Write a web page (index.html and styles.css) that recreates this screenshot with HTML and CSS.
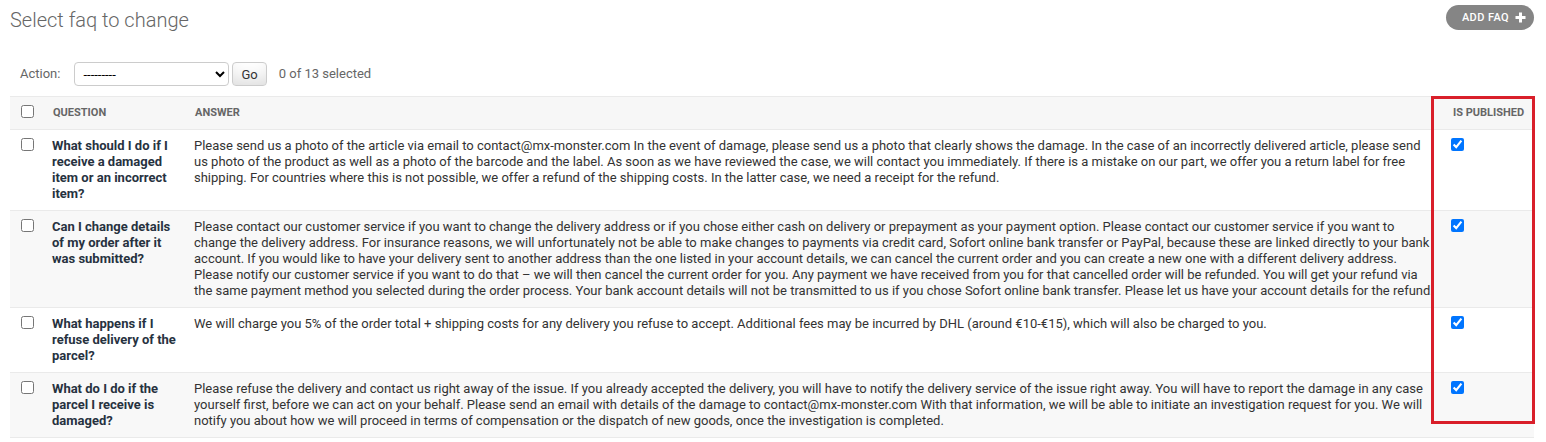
FILE: index.html
```html
<!DOCTYPE html>
<html lang="en">
<head>
<meta charset="utf-8">
<title>Select faq to change</title>
<link rel="stylesheet" href="styles.css">
</head>
<body>
<div class="content">
  <div class="title-row">
    <h1 class="title">Select faq to change</h1>
    <a class="addlink" href="#">ADD FAQ
      <svg class="plus" width="11" height="11" viewBox="0 0 11 11"><path d="M5.5 0.5v10M0.5 5.5h10" stroke="#fff" stroke-width="3"/></svg>
    </a>
  </div>
  <div class="actions">
    <label class="action-label">Action:</label>
    <select class="action-select"><option>---------</option></select>
    <button class="go">Go</button>
    <span class="counter">0 of 13 selected</span>
  </div>
  <div class="table-wrap">
    <table class="result-list">
      <colgroup>
        <col class="c-check"><col class="c-question"><col class="c-answer"><col class="c-pub">
      </colgroup>
      <thead>
        <tr>
          <th class="check-col"><input type="checkbox"></th>
          <th>QUESTION</th>
          <th>ANSWER</th>
          <th class="pub-head">IS PUBLISHED</th>
        </tr>
      </thead>
      <tbody>
        <tr>
          <td class="check-col"><input type="checkbox"></td>
          <th class="question"><a href="#">What should I do if I receive a damaged item or an incorrect item?</a></th>
          <td class="answer">Please send us a photo of the article via email to contact@mx-monster.com In the event of damage, please send us a photo that clearly shows the damage. In the case of an incorrectly delivered article, please send us photo of the product as well as a photo of the barcode and the label. As soon as we have reviewed the case, we will contact you immediately. If there is a mistake on our part, we offer you a return label for free shipping. For countries where this is not possible, we offer a refund of the shipping costs. In the latter case, we need a receipt for the refund.</td>
          <td class="pub"><input type="checkbox" checked></td>
        </tr>
        <tr class="even">
          <td class="check-col"><input type="checkbox"></td>
          <th class="question"><a href="#">Can I change details of my order after it was submitted?</a></th>
          <td class="answer">Please contact our customer service if you want to change the delivery address or if you chose either cash on delivery or prepayment as your payment option. Please contact our customer service if you want to change the delivery address. For insurance reasons, we will unfortunately not be able to make changes to payments via credit card, Sofort online bank transfer or PayPal, because these are linked directly to your bank account. If you would like to have your delivery sent to another address than the one listed in your account details, we can cancel the current order and you can create a new one with a different delivery address. Please notify our customer service if you want to do that – we will then cancel the current order for you. Any payment we have received from you for that cancelled order will be refunded. You will get your refund via the same payment method you selected during the order process. Your bank account details will not be transmitted to us if you chose Sofort online bank transfer. Please let us have your account details for the refund.</td>
          <td class="pub"><input type="checkbox" checked></td>
        </tr>
        <tr>
          <td class="check-col"><input type="checkbox"></td>
          <th class="question"><a href="#">What happens if I refuse delivery of the parcel?</a></th>
          <td class="answer">We will charge you 5% of the order total + shipping costs for any delivery you refuse to accept. Additional fees may be incurred by DHL (around €10-€15), which will also be charged to you.</td>
          <td class="pub"><input type="checkbox" checked></td>
        </tr>
        <tr class="even">
          <td class="check-col"><input type="checkbox"></td>
          <th class="question"><a href="#">What do I do if the parcel I receive is damaged?</a></th>
          <td class="answer">Please refuse the delivery and contact us right away of the issue. If you already accepted the delivery, you will have to notify the delivery service of the issue right away. You will have to report the damage in any case yourself first, before we can act on your behalf. Please send an email with details of the damage to contact@mx-monster.com With that information, we will be able to initiate an investigation request for you. We will notify you about how we will proceed in terms of compensation or the dispatch of new goods, once the investigation is completed.</td>
          <td class="pub"><input type="checkbox" checked></td>
        </tr>
      </tbody>
    </table>
    <div class="highlight"></div>
  </div>
</div>
</body>
</html>
```

FILE: styles.css
```css
html, body {
  margin: 0;
  padding: 0;
  background: #fff;
}
body {
  font-family: Roboto, "Liberation Sans", Arial, sans-serif;
  font-size: 13px;
  color: #333;
}
.content {
  padding: 0 12px 0 10px;
}
.title-row {
  display: flex;
  justify-content: space-between;
  align-items: flex-start;
  height: 52px;
}
.title {
  margin: 9px 0 0 0;
  font-size: 20px;
  font-weight: 300;
  color: #666;
  line-height: 23px;
}
.addlink {
  margin-top: 5px;
  display: flex;
  align-items: center;
  gap: 6px;
  height: 25px;
  padding: 0 8px 0 16px;
  background: #858585;
  color: #fff;
  border-radius: 13px;
  font-size: 11px;
  font-weight: 500;
  letter-spacing: 0.4px;
  text-decoration: none;
}
.plus {
  display: block;
}
.actions {
  display: flex;
  align-items: center;
  padding: 10px;
  height: 24px;
  line-height: 24px;
  color: #666;
}
.action-label {
  font-size: 13px;
  color: #666;
}
.action-select {
  margin-left: 14px;
  width: 155px;
  height: 24px;
  border: 1px solid #ccc;
  border-radius: 4px;
  background: #fff;
  color: #000;
  font-family: Roboto, "Liberation Sans", Arial, sans-serif;
  font-size: 13px;
  padding: 0 0 0 4px;
}
.go {
  margin-left: 3px;
  height: 24px;
  padding: 0 8px;
  font-family: Roboto, "Liberation Sans", Arial, sans-serif;
  font-size: 13px;
  color: #333;
  border: 1px solid #ccc;
  border-radius: 4px;
  background: #fff;
  box-shadow: 0 -15px 20px -10px rgba(0,0,0,0.15) inset;
}
.counter {
  margin-left: 12px;
  font-size: 13px;
  color: #666;
}
.table-wrap {
  position: relative;
}
.result-list {
  width: 100%;
  table-layout: fixed;
  border-collapse: collapse;
}
.c-check { width: 34px; }
.c-question { width: 142px; }
.c-pub { width: 91px; }
.result-list thead th {
  background: #f7f7f7;
  border-top: 1px solid #eaeaea;
  border-bottom: 1px solid #eaeaea;
  color: #666;
  font-size: 11px;
  font-weight: 700;
  text-align: left;
  line-height: 16px;
  padding: 8px 9px;
  white-space: nowrap;
  vertical-align: middle;
}
.result-list thead th.pub-head {
  padding-left: 10px;
}
.result-list thead th.check-col {
  text-align: center;
  padding: 8px;
}
.result-list input[type="checkbox"] {
  margin: 0;
  vertical-align: top;
}
.result-list tbody td,
.result-list tbody th {
  padding: 8px;
  line-height: 16px;
  vertical-align: top;
  border-bottom: 1px solid #eaeaea;
  text-align: left;
  font-size: 13px;
}
.result-list tbody tr.even {
  background: #f8f8f8;
}
.result-list tbody td.check-col {
  text-align: center;
}
.question {
  font-weight: 700;
}
.question a {
  color: #27323f;
  text-decoration: none;
}
.answer {
  color: #333;
}
.highlight {
  position: absolute;
  left: 1421px;
  top: 0;
  width: 98px;
  height: 322px;
  border: 3px solid #d91f2a;
  pointer-events: none;
}
```
